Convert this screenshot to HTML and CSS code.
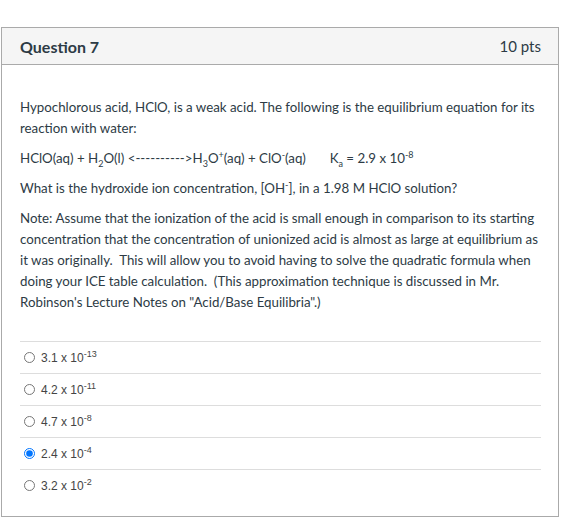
FILE: index.html
```html
<!DOCTYPE html>
<html>
<head>
<meta charset="utf-8">
<link rel="stylesheet" href="styles.css">
</head>
<body>
<div class="card">
  <div class="header">
    <span class="title">Question 7</span>
    <span class="pts">10 pts</span>
  </div>
  <div class="body">
    <p>Hypochlorous acid, HClO, is a weak acid. The following is the equilibrium equation for its reaction with water:</p>
    <p>HClO(aq) + H<sub>2</sub>O(l) &lt;----------&gt;H<sub>3</sub>O<sup>+</sup>(aq) + ClO<sup>-</sup>(aq)&nbsp; &nbsp; &nbsp; &nbsp;K<sub>a</sub> = 2.9 x 10<sup>-8</sup></p>
    <p>What is the hydroxide ion concentration, [OH<sup>-</sup>], in a 1.98 M HClO solution?</p>
    <p>Note: Assume that the ionization of the acid is small enough in comparison to its starting concentration that the concentration of unionized acid is almost as large at equilibrium as it was originally.&nbsp; This will allow you to avoid having to solve the quadratic formula when doing your ICE table calculation.&nbsp; (This approximation technique is discussed in Mr. Robinson's Lecture Notes on "Acid/Base Equilibria".)</p>
    <div class="answers">
      <label class="answer"><input type="radio" name="q7"><span class="val">3.1 x 10<sup>-13</sup></span></label>
      <label class="answer"><input type="radio" name="q7"><span class="val">4.2 x 10<sup>-11</sup></span></label>
      <label class="answer"><input type="radio" name="q7"><span class="val">4.7 x 10<sup>-8</sup></span></label>
      <label class="answer"><input type="radio" name="q7" checked><span class="val">2.4 x 10<sup>-4</sup></span></label>
      <label class="answer"><input type="radio" name="q7"><span class="val">3.2 x 10<sup>-2</sup></span></label>
    </div>
  </div>
</div>
</body>
</html>
```

FILE: styles.css
```css
html, body {
  margin: 0;
  padding: 0;
  background: #ffffff;
}
body {
  font-family: Lato, "Liberation Sans", sans-serif;
  color: #2d3b45;
}
.card {
  margin: 27px 0 0 1px;
  width: 556px;
  border: 1px solid #aaaaaa;
  height: 488px;
  box-sizing: content-box;
}
.header {
  height: 36px;
  background: #f5f5f5;
  border-bottom: 1px solid #aaaaaa;
  display: flex;
  align-items: center;
  justify-content: space-between;
  padding: 0 17px 0 18px;
}
.title {
  font-weight: 700;
  font-size: 16px;
}
.pts {
  font-size: 15px;
  color: #2d3b45;
}
.body {
  padding: 32px 17px 0 18px;
}
.body p {
  margin: 0 0 9px;
  font-size: 13.3px;
  line-height: 21px;
}
sub, sup {
  font-size: 9px;
  line-height: 0;
}
.answers {
  margin-top: 28px;
}
.answer {
  display: flex;
  align-items: center;
  height: 31px;
  border-top: 1px solid #dddddd;
  font-family: "Liberation Sans", Arial, sans-serif;
  font-size: 12px;
  color: #444444;
}
.answer input {
  margin: 0 6px 0 4px;
  width: 11px;
  height: 11px;
}
.val sup {
  font-size: 9px;
}
```
